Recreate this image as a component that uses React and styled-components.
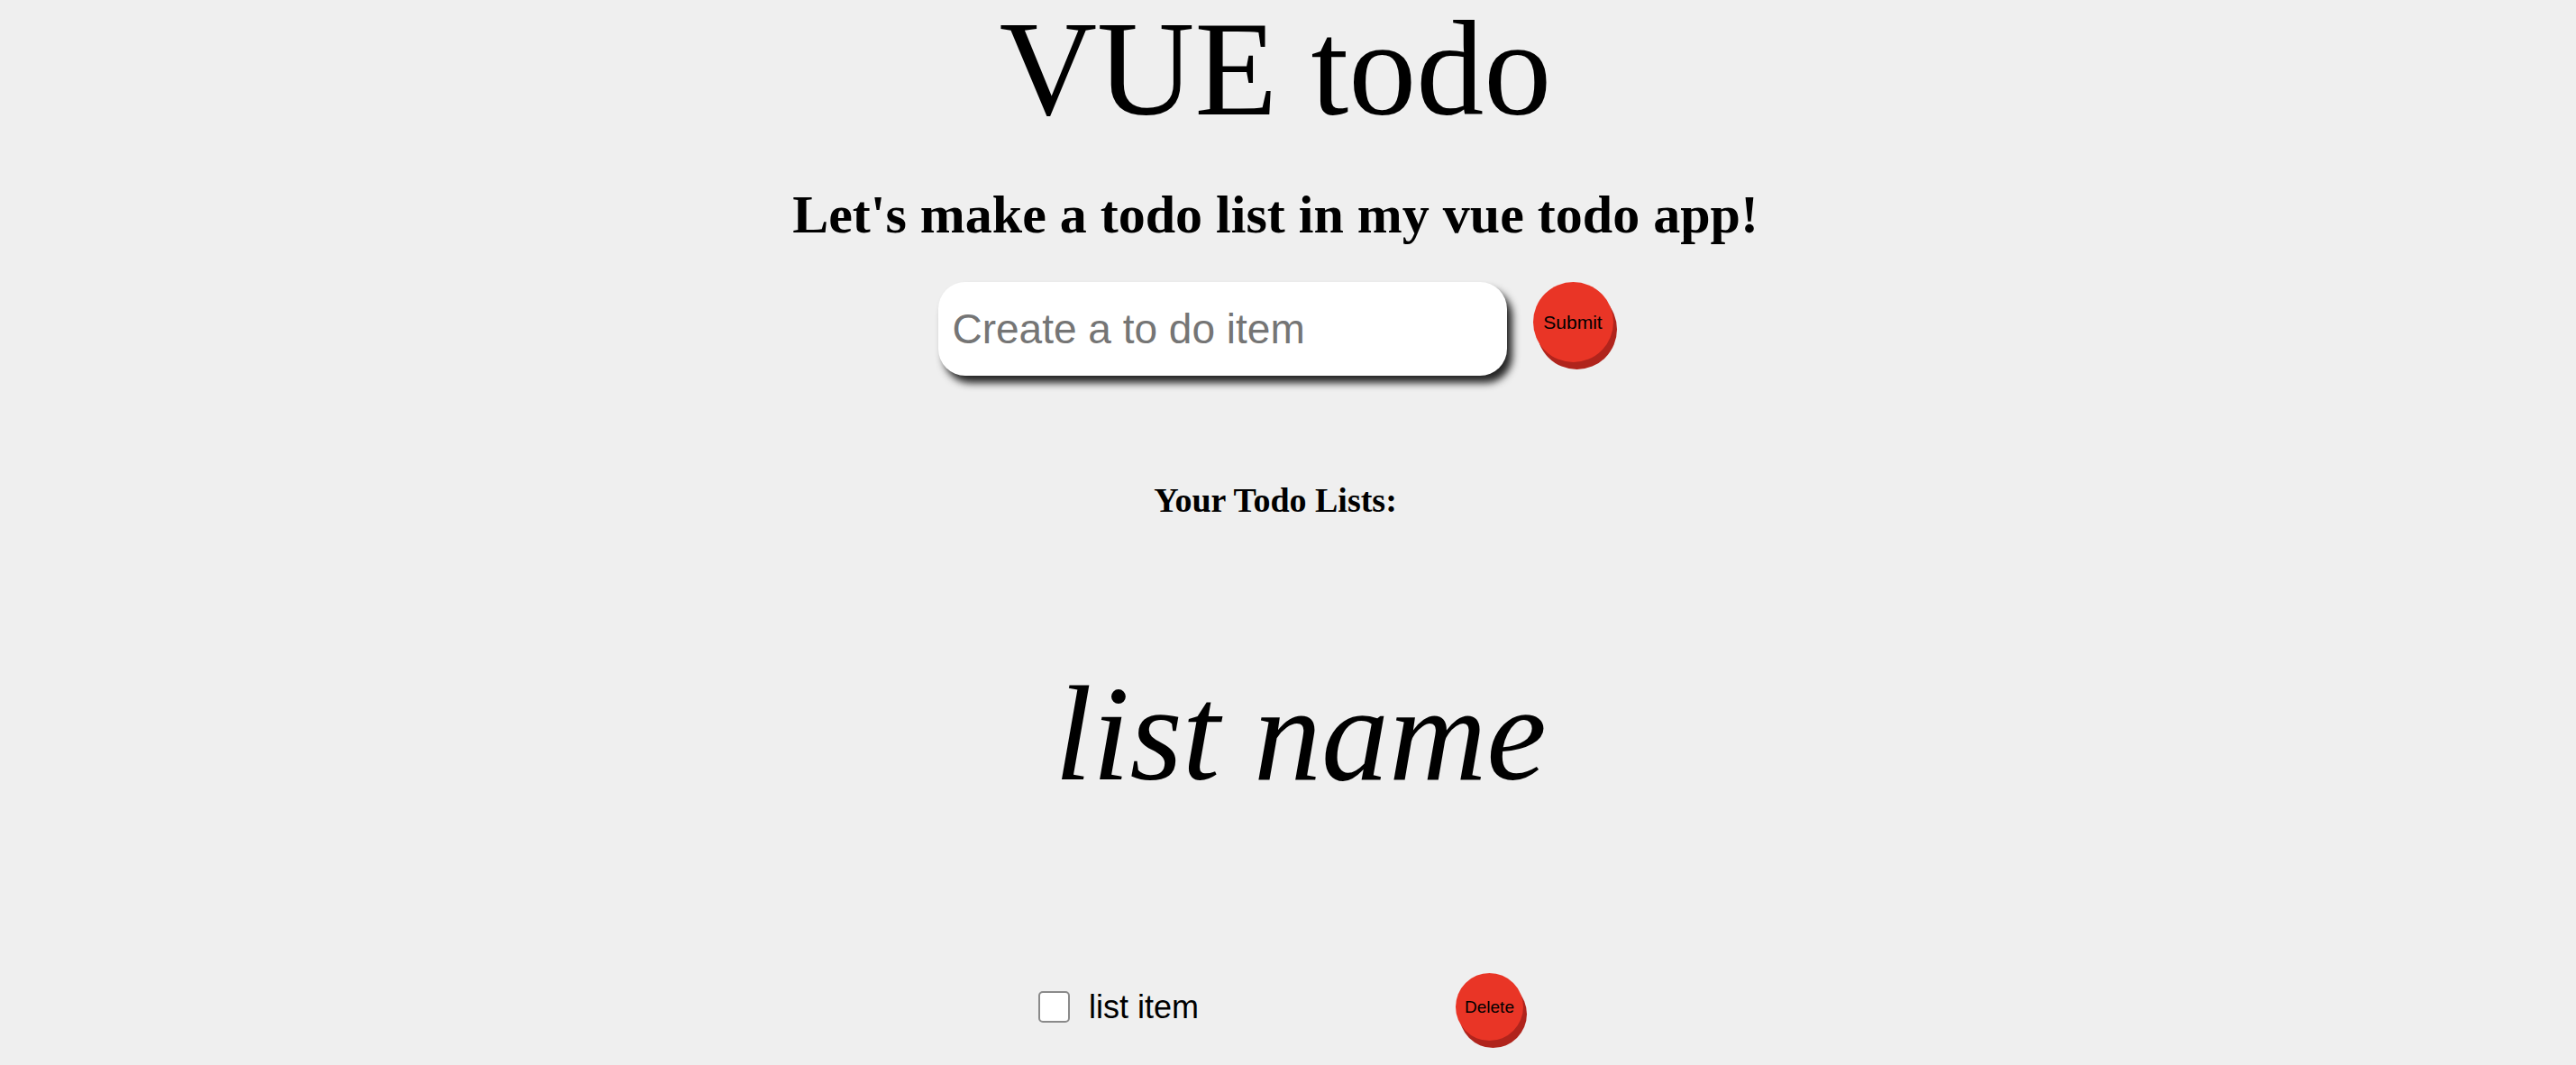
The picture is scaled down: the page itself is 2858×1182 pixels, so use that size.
import React from 'react';
import styled, { createGlobalStyle } from 'styled-components';

const GlobalStyle = createGlobalStyle`
  html, body {
    margin: 0;
    padding: 0;
    background: #efefef;
  }
  body {
    font-family: "Liberation Serif", "Times New Roman", serif;
    color: #000;
  }
`;

const Page = styled.div`
  display: flex;
  flex-direction: column;
  align-items: center;
  padding-right: 28px;
  min-height: 100vh;
`;

const Title = styled.h1`
  margin: 1px 0 0 0;
  font-size: 150px;
  line-height: 1;
  font-weight: normal;
`;

const Subtitle = styled.h2`
  margin: 57px 0 0 0;
  font-size: 60px;
  line-height: 1;
  font-weight: bold;
`;

const Form = styled.form`
  display: flex;
  align-items: flex-start;
  gap: 29px;
  margin-top: 45px;
`;

const TextInput = styled.input`
  box-sizing: border-box;
  width: 631px;
  height: 104px;
  padding: 0 16px;
  border: none;
  border-radius: 30px;
  background: #fff;
  font-family: "Liberation Sans", Arial, sans-serif;
  font-size: 46px;
  color: #000;
  box-shadow: 6px 8px 8px rgba(0, 0, 0, 0.85);
  outline: none;

  &::placeholder {
    color: #757575;
  }
`;

const RoundButton = styled.button`
  width: ${({ size }) => size}px;
  height: ${({ size }) => size}px;
  padding: 0;
  border: none;
  border-radius: 50%;
  background: #e93526;
  box-shadow: 4px 8px 0 #b0241c;
  color: #000;
  font-family: "Liberation Sans", Arial, sans-serif;
  font-size: ${({ textSize }) => textSize}px;
  cursor: pointer;
`;

const SectionHeading = styled.h3`
  margin: 119px 0 0 0;
  font-size: 38px;
  line-height: 1;
  font-weight: bold;
`;

const ListName = styled.h2`
  margin: 165px 0 0 0;
  font-size: 150px;
  line-height: 1;
  font-weight: normal;
  font-style: italic;
  padding-left: 56px;
`;

const ItemRow = styled.div`
  box-sizing: border-box;
  display: flex;
  align-items: center;
  justify-content: space-between;
  width: 550px;
  padding-left: 12px;
  margin-top: 191px;
`;

const ItemLabel = styled.label`
  display: flex;
  align-items: center;
  gap: 21px;
  font-family: "Liberation Sans", Arial, sans-serif;
  font-size: 36px;
`;

const Checkbox = styled.input`
  appearance: none;
  box-sizing: border-box;
  width: 35px;
  height: 35px;
  margin: 0;
  border: 2px solid #8a8a8a;
  border-radius: 5px;
  background: #fff;
`;

const App = () => {
  return (
    <Page>
      <GlobalStyle />
      <Title>VUE todo</Title>
      <Subtitle>Let's make a todo list in my vue todo app!</Subtitle>
      <Form onSubmit={e => e.preventDefault()}>
        <TextInput type="text" placeholder="Create a to do item" />
        <RoundButton type="submit" size={89} textSize={21}>
          Submit
        </RoundButton>
      </Form>
      <SectionHeading>Your Todo Lists:</SectionHeading>
      <ListName>list name</ListName>
      <ItemRow>
        <ItemLabel>
          <Checkbox type="checkbox" />
          list item
        </ItemLabel>
        <RoundButton type="button" size={75} textSize={19}>
          Delete
        </RoundButton>
      </ItemRow>
    </Page>
  );
};

export default App;
